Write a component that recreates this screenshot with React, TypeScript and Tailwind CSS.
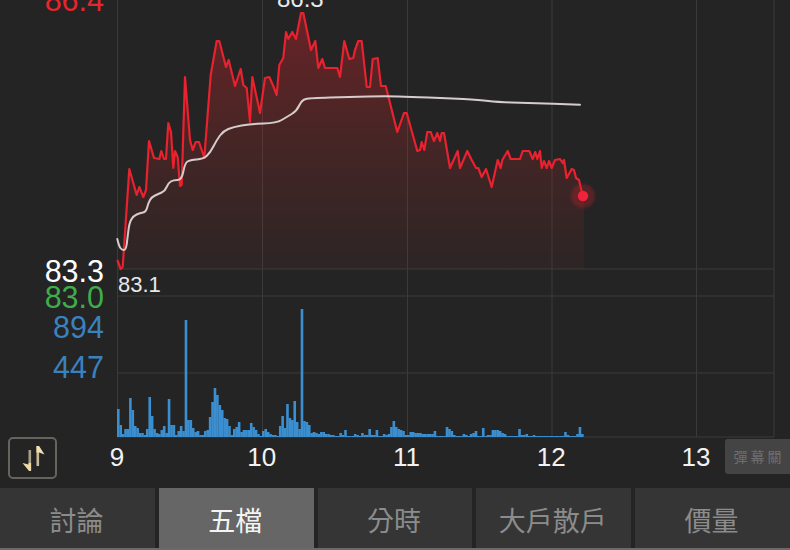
import React from 'react';

// price line, traced from the chart (x, y in page pixels)
const pricePts =
  '117.3,260 120.7,269 122.7,267 129.3,169 136.7,195 139.3,187 143.3,197 146,190 149,141 154,158 159.3,159 161.3,151 164,159 166,159 168.3,123 171,132 173.3,168 175,151 177.7,157 180,186 181.7,185 185,77 190,140 192.7,150 195.7,142 199,142 204.3,158 210.7,75 216.7,41 219.3,41 226,67 228.7,60 235,86 240.7,69 243.3,85 246.7,88 250,122 252.3,77 260,113 265,78 269.3,77 273.3,86 276.7,95 279.3,65 283.3,58 286,32 288.3,39 292.3,32 296,39 301,13 303.3,13 311,50 315.3,41 318.3,68 322.3,59 325,68 337.3,68 340,77 344.3,41 349.3,59 353.3,58 355,50 358.3,41 361.7,41 366.7,87 370,87 372.7,59 377.7,58 381,86 385.7,86 397.3,132 404,113 406.7,113 417.3,151 420,150 421.7,142 424.3,150 427.3,132 430.7,132 434,141 437.3,133 440,141 441.7,133 444,133 450,168 457.7,151 460,168 467.3,151 471.7,160 476,168 478.3,168 481.7,177 486,169 491.7,187 497.7,160 500.7,168 502.3,160 507.7,151 510.7,159 520,159 522.7,151 529.3,151 532.7,159 535.3,152 537.3,159 540,151 541.7,168 544,161 546.7,168 549,161 551.7,168 555,160 560,159 562.7,163 564,160 566.7,178 571.7,169 574,170 576,178 579,180 582.7,196';

const avgPts =
  '117.3,239 119,246 121.7,250 126,250 127.5,238 129.3,223 133.3,216 140,213 146,212 148.3,203 151.7,197 158.3,194 165,191 168.3,183 173.3,180 181.7,180 185,163 190,160 203.3,159 210,153 216.7,140 223.3,131 233.3,127 250,124 276.7,123 286.7,117 296.7,111 301.7,100 310,98 350,97 386.7,96 410,97 446.7,98 480,100 496.7,102 526.7,103 580,104.7';

const volumes = [
  28, 12, 3, 8, 8, 39, 27, 11, 9, 4, 4, 2, 8, 40, 21, 8, 4, 3, 7, 11, 4, 38, 12, 12, 2, 6, 11, 6, 117, 17, 17, 9, 5, 6, 2, 2,
  6, 7, 20, 35, 49, 42, 32, 27, 19, 18, 11, 2, 8, 10, 15, 5, 7, 7, 7, 14, 10, 7, 3, 1, 6, 8, 5, 3, 2, 2, 1, 11, 21, 9, 33, 19,
  17, 36, 15, 8, 128, 16, 15, 12, 4, 5, 4, 3, 5, 5, 3, 3, 2, 2, 1, 1, 4, 2, 7, 1, 1, 1, 3, 2, 1, 4, 2, 2, 8, 2, 2, 7, 1, 1, 3,
  2, 3, 10, 16, 10, 8, 7, 6, 2, 2, 5, 5, 4, 4, 4, 3, 3, 3, 3, 3, 6, 1, 1, 1, 1, 10, 8, 6, 2, 1, 1, 1, 3, 2, 1, 3, 4, 6, 1, 1,
  9, 1, 2, 2, 7, 7, 7, 6, 4, 3, 1, 1, 1, 1, 1, 8, 2, 2, 3, 1, 1, 2, 1, 1, 1, 1, 1, 1, 1, 1, 1, 1, 1, 1, 5, 2, 1, 1, 1, 3, 10, 3,
];

const sans = "font-['Liberation_Sans',Arial,sans-serif]";
const cjk = "font-['Noto_Sans_CJK_TC','Noto_Sans',sans-serif]";

const tabs = ['討論', '五檔', '分時', '大戶散戶', '價量'];
const hours = [9, 10, 11, 12, 13];

// round the corners of the average line with midpoints
const smooth = (pts: string) => {
  const p = pts.split(' ').map(s => s.split(',').map(Number));
  let d = `M${p[0][0]} ${p[0][1]}`;
  for (let i = 1; i < p.length - 1; i++) {
    const mx = (p[i][0] + p[i + 1][0]) / 2;
    const my = (p[i][1] + p[i + 1][1]) / 2;
    d += ` Q${p[i][0]} ${p[i][1]} ${mx} ${my}`;
  }
  const last = p[p.length - 1];
  return `${d} L${last[0]} ${last[1]}`;
};

const Chart = () => (
  <svg className="w-[686px] h-[438px] shrink-0" viewBox="104 0 686 438">
    <defs>
      <linearGradient id="area" x1="0" y1="0" x2="0" y2="1">
        <stop offset="0" stopColor="#c8202a" stopOpacity="0.42" />
        <stop offset="0.55" stopColor="#c02a2a" stopOpacity="0.2" />
        <stop offset="1" stopColor="#b03030" stopOpacity="0.07" />
      </linearGradient>
      <filter id="soft" x="-50%" y="-50%" width="200%" height="200%">
        <feGaussianBlur stdDeviation="1.6" />
      </filter>
      <filter id="tiny" x="-5%" y="-5%" width="110%" height="110%">
        <feGaussianBlur stdDeviation="0.35" />
      </filter>
    </defs>

    {/* grid */}
    <g stroke="#3a3a3a" strokeWidth="1">
      {[117.5, 262.5, 407.5, 552, 696.5, 774].map(x => (
        <line key={x} x1={x} y1="0" x2={x} y2="437" />
      ))}
      {[269, 296, 373, 437].map(y => (
        <line key={y} x1="117" y1={y} x2="774" y2={y} />
      ))}
    </g>

    <polygon points={`117.3,269 ${pricePts} 584,196 584,269`} fill="url(#area)" />
    <g filter="url(#tiny)">
      <polyline points={pricePts} fill="none" stroke="#e8202e" strokeWidth="2.2" strokeLinejoin="round" />
      <path d={smooth(avgPts)} fill="none" stroke="#d6cccc" strokeWidth="2" strokeLinecap="round" />
    </g>

    <circle cx="583" cy="196" r="12" fill="#d0202c" opacity="0.3" filter="url(#soft)" />
    <circle cx="583" cy="196" r="5.2" fill="#f0233a" />

    {/* volume */}
    <g fill="#3a8fd0" filter="url(#tiny)">
      {volumes.map((h, i) => (
        <rect key={i} x={117 + i * 2.417} y={437 - h} width="2.6" height={h} />
      ))}
    </g>
  </svg>
);

const App = () => {
  return (
    <div className={`w-[790px] h-[550px] bg-[#242424] overflow-hidden flex flex-col relative ${sans}`}>
      <div className="flex h-[438px] shrink-0">
        <div className="w-[104px] shrink-0 flex flex-col items-end text-[30.5px] leading-[26px]">
          <span className="-mt-[13px] text-[#e6262e]">86.4</span>
          <span className="mt-[245px] text-white">83.3</span>
          <span className="text-[#3fae4a]">83.0</span>
          <span className="mt-1 text-[#3a82bd]">894</span>
          <span className="mt-[14px] text-[#3a82bd]">447</span>
        </div>
        <Chart />
      </div>

      <span className="absolute left-[277px] -top-[14px] text-[24px] leading-[26px] text-[#e8e8e8]">86.3</span>
      <span className="absolute left-[118px] top-[273px] text-[22px] leading-[24px] text-[#e8e8e8]">83.1</span>

      <div className="h-[50px] shrink-0 flex items-start">
        <button className="ml-2 mt-[-1px] w-[49px] h-[42px] shrink-0 border-2 border-[#66645f] rounded-[5px] flex items-center justify-center">
          <svg width="26" height="28" viewBox="0 0 26 28">
            <rect x="8.5" y="6" width="2.6" height="20" fill="#a89e85" />
            <polygon points="2.5,19 8.5,20.5 8.5,19 11.1,19 11.1,27 9,27" fill="#ecd9a6" />
            <rect x="16.5" y="2" width="2.6" height="20" fill="#c9bb95" />
            <polygon points="16.5,2 19.1,2 24.5,10.5 19.1,8.5 16.5,8.5" fill="#f0dfb0" />
          </svg>
        </button>
        <div className="ml-10 w-[619px] shrink-0 flex justify-between text-[26px] leading-[30px] text-[#f2f2f2] pt-[4px]">
          {hours.map(h => (
            <span key={h} className="w-10 text-center">{h}</span>
          ))}
        </div>
        <div className={`ml-auto mt-px w-[65px] h-[35px] bg-[#444444] rounded-l-[3px] flex items-center justify-center pl-[3px] text-[14px] tracking-[3px] text-[#6f6f6f] ${cjk}`}>
          彈幕關
        </div>
      </div>

      <div className="h-[60px] shrink-0 grid grid-cols-5 gap-1">
        {tabs.map((t, i) => (
          <div
            key={t}
            className={`flex items-center justify-center pt-1 pr-0.5 text-[27px] ${cjk} ${
              i === 1 ? 'bg-[#666666] text-[#f4f4f4]' : 'bg-[#353535] text-[#8c8c8c]'
            }`}
          >
            {t}
          </div>
        ))}
      </div>
      <div className="h-[2px] bg-[#6a6a6a] shrink-0" />
    </div>
  );
};

export default App;
